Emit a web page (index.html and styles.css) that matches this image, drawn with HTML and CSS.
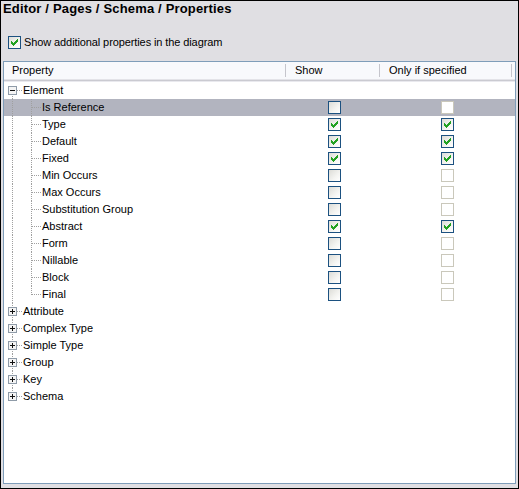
FILE: index.html
```html
<!DOCTYPE html>
<html>
<head>
<meta charset="utf-8">
<title>Properties</title>
<link rel="stylesheet" href="styles.css">
</head>
<body>
<div class="frame">
  <div class="title">Editor / Pages / Schema / Properties</div>
  <div class="opt">
    <span class="cb on"><svg viewBox="0 0 7 7" width="7" height="7"><path d="M6 0h1v1h-1zM5 1h2v1h-2zM0 2h1v1h-1zM4 2h3v1h-3zM0 3h2v1h-2zM3 3h3v1h-3zM0 4h5v1h-5zM1 5h3v1h-3zM2 6h1v1h-1z"/></svg></span>
    <span class="opt-label">Show additional properties in the diagram</span>
  </div>
  <div class="panel">
    <div class="head">
      <div class="hc h1"><span>Property</span><i class="sep"></i></div>
      <div class="hc"><span>Show</span><i class="sep"></i></div>
      <div class="hc"><span>Only if specified</span><i class="sep"></i></div>
    </div>

    <div class="row">
      <div class="tc"><span class="ga first"><svg class="exp" viewBox="0 0 9 9" width="9" height="9"><rect x="0.5" y="0.5" width="8" height="8" class="bx"/><path d="M2 4h5v1h-5z" class="sg"/></svg></span><span class="lbl">Element</span></div>
      <div class="cc"></div><div class="cc"></div>
    </div>

    <div class="row sel">
      <div class="tc"><span class="gv"></span><span class="gb mid"></span><span class="lbl">Is Reference</span></div>
      <div class="cc c2"><span class="cb"></span></div>
      <div class="cc c3"><span class="cb dis"></span></div>
    </div>
    <div class="row">
      <div class="tc"><span class="gv"></span><span class="gb mid"></span><span class="lbl">Type</span></div>
      <div class="cc c2"><span class="cb on"><svg viewBox="0 0 7 7" width="7" height="7"><path d="M6 0h1v1h-1zM5 1h2v1h-2zM0 2h1v1h-1zM4 2h3v1h-3zM0 3h2v1h-2zM3 3h3v1h-3zM0 4h5v1h-5zM1 5h3v1h-3zM2 6h1v1h-1z"/></svg></span></div>
      <div class="cc c3"><span class="cb on"><svg viewBox="0 0 7 7" width="7" height="7"><path d="M6 0h1v1h-1zM5 1h2v1h-2zM0 2h1v1h-1zM4 2h3v1h-3zM0 3h2v1h-2zM3 3h3v1h-3zM0 4h5v1h-5zM1 5h3v1h-3zM2 6h1v1h-1z"/></svg></span></div>
    </div>
    <div class="row">
      <div class="tc"><span class="gv"></span><span class="gb mid"></span><span class="lbl">Default</span></div>
      <div class="cc c2"><span class="cb on"><svg viewBox="0 0 7 7" width="7" height="7"><path d="M6 0h1v1h-1zM5 1h2v1h-2zM0 2h1v1h-1zM4 2h3v1h-3zM0 3h2v1h-2zM3 3h3v1h-3zM0 4h5v1h-5zM1 5h3v1h-3zM2 6h1v1h-1z"/></svg></span></div>
      <div class="cc c3"><span class="cb on"><svg viewBox="0 0 7 7" width="7" height="7"><path d="M6 0h1v1h-1zM5 1h2v1h-2zM0 2h1v1h-1zM4 2h3v1h-3zM0 3h2v1h-2zM3 3h3v1h-3zM0 4h5v1h-5zM1 5h3v1h-3zM2 6h1v1h-1z"/></svg></span></div>
    </div>
    <div class="row">
      <div class="tc"><span class="gv"></span><span class="gb mid"></span><span class="lbl">Fixed</span></div>
      <div class="cc c2"><span class="cb on"><svg viewBox="0 0 7 7" width="7" height="7"><path d="M6 0h1v1h-1zM5 1h2v1h-2zM0 2h1v1h-1zM4 2h3v1h-3zM0 3h2v1h-2zM3 3h3v1h-3zM0 4h5v1h-5zM1 5h3v1h-3zM2 6h1v1h-1z"/></svg></span></div>
      <div class="cc c3"><span class="cb on"><svg viewBox="0 0 7 7" width="7" height="7"><path d="M6 0h1v1h-1zM5 1h2v1h-2zM0 2h1v1h-1zM4 2h3v1h-3zM0 3h2v1h-2zM3 3h3v1h-3zM0 4h5v1h-5zM1 5h3v1h-3zM2 6h1v1h-1z"/></svg></span></div>
    </div>
    <div class="row">
      <div class="tc"><span class="gv"></span><span class="gb mid"></span><span class="lbl">Min Occurs</span></div>
      <div class="cc c2"><span class="cb"></span></div>
      <div class="cc c3"><span class="cb dis"></span></div>
    </div>
    <div class="row">
      <div class="tc"><span class="gv"></span><span class="gb mid"></span><span class="lbl">Max Occurs</span></div>
      <div class="cc c2"><span class="cb"></span></div>
      <div class="cc c3"><span class="cb dis"></span></div>
    </div>
    <div class="row">
      <div class="tc"><span class="gv"></span><span class="gb mid"></span><span class="lbl">Substitution Group</span></div>
      <div class="cc c2"><span class="cb"></span></div>
      <div class="cc c3"><span class="cb dis"></span></div>
    </div>
    <div class="row">
      <div class="tc"><span class="gv"></span><span class="gb mid"></span><span class="lbl">Abstract</span></div>
      <div class="cc c2"><span class="cb on"><svg viewBox="0 0 7 7" width="7" height="7"><path d="M6 0h1v1h-1zM5 1h2v1h-2zM0 2h1v1h-1zM4 2h3v1h-3zM0 3h2v1h-2zM3 3h3v1h-3zM0 4h5v1h-5zM1 5h3v1h-3zM2 6h1v1h-1z"/></svg></span></div>
      <div class="cc c3"><span class="cb on"><svg viewBox="0 0 7 7" width="7" height="7"><path d="M6 0h1v1h-1zM5 1h2v1h-2zM0 2h1v1h-1zM4 2h3v1h-3zM0 3h2v1h-2zM3 3h3v1h-3zM0 4h5v1h-5zM1 5h3v1h-3zM2 6h1v1h-1z"/></svg></span></div>
    </div>
    <div class="row">
      <div class="tc"><span class="gv"></span><span class="gb mid"></span><span class="lbl">Form</span></div>
      <div class="cc c2"><span class="cb"></span></div>
      <div class="cc c3"><span class="cb dis"></span></div>
    </div>
    <div class="row">
      <div class="tc"><span class="gv"></span><span class="gb mid"></span><span class="lbl">Nillable</span></div>
      <div class="cc c2"><span class="cb"></span></div>
      <div class="cc c3"><span class="cb dis"></span></div>
    </div>
    <div class="row">
      <div class="tc"><span class="gv"></span><span class="gb mid"></span><span class="lbl">Block</span></div>
      <div class="cc c2"><span class="cb"></span></div>
      <div class="cc c3"><span class="cb dis"></span></div>
    </div>
    <div class="row">
      <div class="tc"><span class="gv"></span><span class="gb last"></span><span class="lbl">Final</span></div>
      <div class="cc c2"><span class="cb"></span></div>
      <div class="cc c3"><span class="cb dis"></span></div>
    </div>

    <div class="row">
      <div class="tc"><span class="ga mid"><svg class="exp" viewBox="0 0 9 9" width="9" height="9"><rect x="0.5" y="0.5" width="8" height="8" class="bx"/><path d="M2 4h5v1h-5zM4 2h1v5h-1z" class="sg"/></svg></span><span class="lbl">Attribute</span></div>
      <div class="cc"></div><div class="cc"></div>
    </div>
    <div class="row">
      <div class="tc"><span class="ga mid"><svg class="exp" viewBox="0 0 9 9" width="9" height="9"><rect x="0.5" y="0.5" width="8" height="8" class="bx"/><path d="M2 4h5v1h-5zM4 2h1v5h-1z" class="sg"/></svg></span><span class="lbl">Complex Type</span></div>
      <div class="cc"></div><div class="cc"></div>
    </div>
    <div class="row">
      <div class="tc"><span class="ga mid"><svg class="exp" viewBox="0 0 9 9" width="9" height="9"><rect x="0.5" y="0.5" width="8" height="8" class="bx"/><path d="M2 4h5v1h-5zM4 2h1v5h-1z" class="sg"/></svg></span><span class="lbl">Simple Type</span></div>
      <div class="cc"></div><div class="cc"></div>
    </div>
    <div class="row">
      <div class="tc"><span class="ga mid"><svg class="exp" viewBox="0 0 9 9" width="9" height="9"><rect x="0.5" y="0.5" width="8" height="8" class="bx"/><path d="M2 4h5v1h-5zM4 2h1v5h-1z" class="sg"/></svg></span><span class="lbl">Group</span></div>
      <div class="cc"></div><div class="cc"></div>
    </div>
    <div class="row">
      <div class="tc"><span class="ga mid"><svg class="exp" viewBox="0 0 9 9" width="9" height="9"><rect x="0.5" y="0.5" width="8" height="8" class="bx"/><path d="M2 4h5v1h-5zM4 2h1v5h-1z" class="sg"/></svg></span><span class="lbl">Key</span></div>
      <div class="cc"></div><div class="cc"></div>
    </div>
    <div class="row">
      <div class="tc"><span class="ga last"><svg class="exp" viewBox="0 0 9 9" width="9" height="9"><rect x="0.5" y="0.5" width="8" height="8" class="bx"/><path d="M2 4h5v1h-5zM4 2h1v5h-1z" class="sg"/></svg></span><span class="lbl">Schema</span></div>
      <div class="cc"></div><div class="cc"></div>
    </div>
  </div>
</div>
</body>
</html>
```

FILE: styles.css
```css
html, body {
  margin: 0;
  padding: 0;
  background: #e0dfe3;
}

.frame {
  box-sizing: border-box;
  width: 519px;
  height: 489px;
  border: 1px solid #000;
  background: #e0dfe3;
  font-family: "Liberation Sans", Arial, sans-serif;
  font-size: 11px;
  color: #000;
  display: flex;
  flex-direction: column;
}

.title {
  font-size: 13px;
  font-weight: bold;
  line-height: 16px;
  height: 16px;
  padding-left: 2px;
  letter-spacing: 0.17px;
  white-space: nowrap;
}

.opt {
  margin-top: 17px;
  height: 17px;
  line-height: 17px;
  display: flex;
  align-items: center;
  padding-left: 7px;
}

.opt-label {
  margin-left: 3px;
  letter-spacing: -0.1px;
  white-space: nowrap;
}

.panel {
  margin: 10px 2px 0 2px;
  width: 513px;
  height: 423px;
  box-sizing: border-box;
  border: 1px solid #7f9db9;
  background: #fff;
  display: flex;
  flex-direction: column;
}

.head {
  display: grid;
  grid-template-columns: 282px 94px 132px 1fr;
  height: 20px;
  background: linear-gradient(to bottom,
    #f8f9fc 0, #f8f9fc 17px,
    #e3e3e8 17px, #e3e3e8 18px,
    #cacad1 18px, #cacad1 19px,
    #e9e9ee 19px, #e9e9ee 20px);
}

.hc {
  height: 17px;
  line-height: 17px;
  display: flex;
  align-items: center;
  justify-content: space-between;
  padding-left: 9px;
  white-space: nowrap;
}

.hc.h1 {
  padding-left: 8px;
}

.sep {
  display: block;
  width: 1px;
  height: 13px;
  background: #c5c5cc;
}

.row {
  display: grid;
  grid-template-columns: 282px 94px 132px 1fr;
  height: 17px;
  line-height: 17px;
}

.row.sel {
  background: #b2b4bf;
}

.tc {
  display: flex;
  align-items: center;
  padding-left: 4px;
  height: 17px;
  white-space: nowrap;
}

.lbl {
  margin-left: 1px;
}

.ga, .gb, .gv {
  display: flex;
  align-items: center;
  height: 17px;
  flex: none;
}

.ga, .gb {
  width: 14px;
}

.gv {
  width: 19px;
  background: repeating-linear-gradient(to bottom, #a0a0a0 0, #a0a0a0 1px, transparent 1px, transparent 2px) 4px 0 / 1px 17px no-repeat;
}

.ga.first {
  background:
    repeating-linear-gradient(to right, #a0a0a0 0, #a0a0a0 1px, transparent 1px, transparent 2px) 5px 8px / 9px 1px no-repeat,
    repeating-linear-gradient(to bottom, #a0a0a0 0, #a0a0a0 1px, transparent 1px, transparent 2px) 4px 8px / 1px 9px no-repeat;
}

.ga.mid, .gb.mid {
  background:
    repeating-linear-gradient(to right, #a0a0a0 0, #a0a0a0 1px, transparent 1px, transparent 2px) 5px 8px / 9px 1px no-repeat,
    repeating-linear-gradient(to bottom, #a0a0a0 0, #a0a0a0 1px, transparent 1px, transparent 2px) 4px 0 / 1px 17px no-repeat;
}

.ga.last, .gb.last {
  background:
    repeating-linear-gradient(to right, #a0a0a0 0, #a0a0a0 1px, transparent 1px, transparent 2px) 5px 8px / 9px 1px no-repeat,
    repeating-linear-gradient(to bottom, #a0a0a0 0, #a0a0a0 1px, transparent 1px, transparent 2px) 4px 0 / 1px 9px no-repeat;
}

.exp {
  display: block;
  shape-rendering: crispEdges;
}

.exp .bx {
  fill: #f4f4f4;
  stroke: #8f9ba8;
  stroke-width: 1;
}

.exp .sg {
  fill: #111;
}

.cc {
  display: flex;
  align-items: center;
  height: 17px;
}

.c2 {
  padding-left: 42px;
}

.c3 {
  padding-left: 61px;
}

.cb {
  box-sizing: border-box;
  width: 13px;
  height: 13px;
  border: 1px solid #1c5180;
  background: linear-gradient(135deg, #dcdcd7 0%, #f4f4f1 60%, #ffffff 100%);
  display: flex;
  align-items: center;
  justify-content: center;
  flex: none;
}

.cb svg {
  display: block;
  fill: #21a121;
  shape-rendering: crispEdges;
}

.cb.dis {
  border-color: #cac8bb;
  background: #fff;
}
```
